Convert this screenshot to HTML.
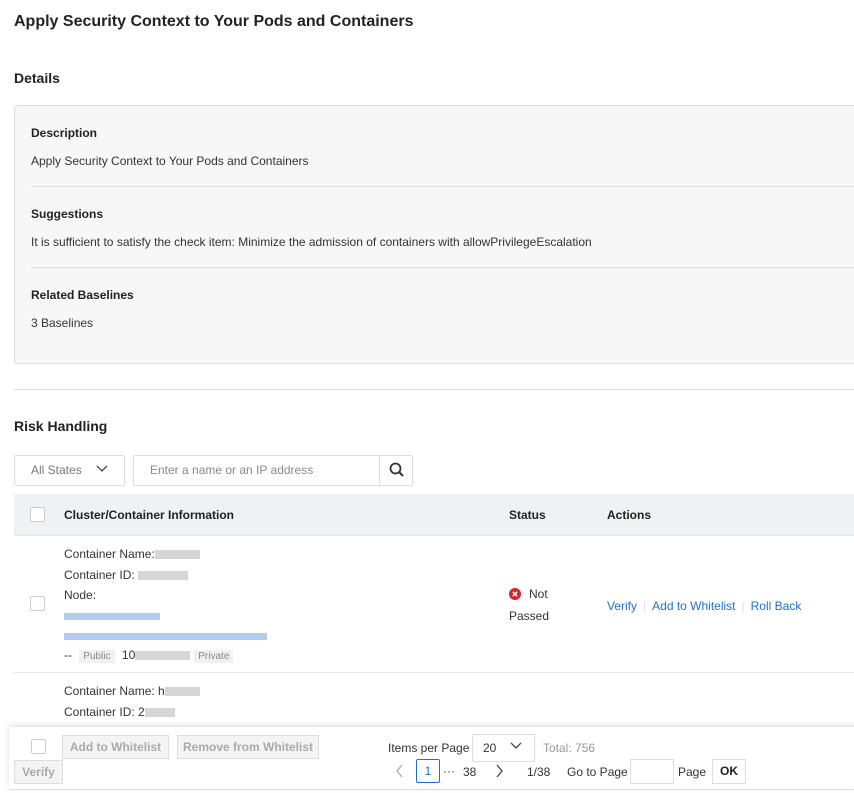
<!DOCTYPE html>
<html><head><meta charset="utf-8"><style>
*{box-sizing:border-box;margin:0;padding:0}
body{width:854px;height:793px;overflow:hidden;background:#fff;font-family:"Liberation Sans",Arial,sans-serif;color:#333;font-size:12px;position:relative}
.a{position:absolute;white-space:nowrap}
.b{font-weight:bold}
.blur{display:inline-block;height:9px;background:#ccc;vertical-align:middle;opacity:.8}
.bl{background:#9cc0ee}
.tag{display:inline-block;background:#f0f0f0;color:#888;font-size:10px;padding:1px 4px;margin:0 4px}
.cb{position:absolute;width:15px;height:15px;border:1px solid #ccc;background:#fff;border-radius:2px}
.btn{position:absolute;border:1px solid #ddd;background:#f4f4f4;color:#aaa;font-size:12px;font-weight:bold;text-align:center;line-height:22px}
a{color:#1e6fd0;text-decoration:none}
</style></head><body>
<div class="a b" style="left:14px;top:13px;font-size:16px;color:#222">Apply Security Context to Your Pods and Containers</div>
<div class="a b" style="left:14px;top:70px;font-size:14px;color:#222">Details</div>
<div class="a" style="left:14px;top:105px;width:860px;height:259px;background:#f7f7f7;border:1px solid #ddd;border-radius:3px"></div>
<div class="a b" style="left:31px;top:126px;color:#222">Description</div>
<div class="a" style="left:31px;top:154px">Apply Security Context to Your Pods and Containers</div>
<div class="a" style="left:31px;top:186px;width:823px;height:1px;background:#ddd"></div>
<div class="a b" style="left:31px;top:207px;color:#222">Suggestions</div>
<div class="a" style="left:31px;top:235px">It is sufficient to satisfy the check item: Minimize the admission of containers with allowPrivilegeEscalation</div>
<div class="a" style="left:31px;top:267px;width:823px;height:1px;background:#ddd"></div>
<div class="a b" style="left:31px;top:288px;color:#222">Related Baselines</div>
<div class="a" style="left:31px;top:316px">3 Baselines</div>
<div class="a" style="left:14px;top:389px;width:840px;height:1px;background:#ddd"></div>
<div class="a b" style="left:14px;top:418px;font-size:14px;color:#222">Risk Handling</div>
<div class="a" style="left:14px;top:455px;width:111px;height:31px;border:1px solid #ddd;border-radius:2px"></div>
<div class="a" style="left:31px;top:463px;color:#777">All States</div>
<svg class="a" style="left:95px;top:464px" width="14" height="10"><path d="M2 2l5 5 5-5" stroke="#444" fill="none" stroke-width="1.3"/></svg>
<div class="a" style="left:133px;top:455px;width:280px;height:31px;border:1px solid #ddd;border-radius:2px"></div>
<div class="a" style="left:379px;top:455px;width:1px;height:31px;background:#ddd"></div>
<div class="a" style="left:150px;top:463px;color:#888">Enter a name or an IP address</div>
<svg class="a" style="left:388px;top:461px" width="18" height="18"><circle cx="7.5" cy="7.5" r="5" stroke="#333" stroke-width="1.8" fill="none"/><path d="M11 11l4 4" stroke="#333" stroke-width="2"/></svg>
<div class="a" style="left:14px;top:494px;width:840px;height:42px;background:#eff1f4;border-bottom:1px solid #e3e5e8"></div>
<div class="cb" style="left:30px;top:507px"></div>
<div class="a b" style="left:64px;top:508px;color:#222">Cluster/Container Information</div>
<div class="a b" style="left:509px;top:508px;color:#222">Status</div>
<div class="a b" style="left:607px;top:508px;color:#222">Actions</div>
<div class="a" style="left:64px;top:547px">Container Name:<span class="blur" style="width:45px"></span></div>
<div class="a" style="left:64px;top:568px">Container ID: <span class="blur" style="width:50px"></span></div>
<div class="a" style="left:64px;top:588px">Node:</div>
<div class="cb" style="left:30px;top:596px"></div>
<div class="a" style="left:64px;top:609px"><span class="blur bl" style="width:96px;height:7px"></span></div>
<div class="a" style="left:64px;top:629px"><span class="blur bl" style="width:203px;height:7px"></span></div>
<div class="a" style="left:64px;top:648px">-- <span class="tag">Public</span> 10<span class="blur" style="width:55px"></span><span class="tag">Private</span></div>
<svg class="a" style="left:509px;top:588px" width="12" height="12"><circle cx="6" cy="6" r="6" fill="#d9222a"/><path d="M3.8 3.8l4.4 4.4M8.2 3.8l-4.4 4.4" stroke="#fff" stroke-width="1.5"/></svg>
<div class="a" style="left:529px;top:587px">Not</div>
<div class="a" style="left:509px;top:609px">Passed</div>
<div class="a" style="left:607px;top:599px"><a>Verify</a><span style="color:#ddd;margin:0 6px">|</span><a>Add to Whitelist</a><span style="color:#ddd;margin:0 6px">|</span><a>Roll Back</a></div>
<div class="a" style="left:14px;top:672px;width:840px;height:1px;background:#e5e5e5"></div>
<div class="a" style="left:64px;top:684px">Container Name: h<span class="blur" style="width:35px"></span></div>
<div class="a" style="left:64px;top:705px">Container ID: 2<span class="blur" style="width:30px"></span></div>
<div class="a" style="left:9px;top:727px;width:850px;height:63px;background:#fff;box-shadow:0 -2px 6px rgba(0,0,0,.12);border-bottom:1px solid #ddd"></div>
<div class="cb" style="left:31px;top:739px"></div>
<div class="btn" style="left:62px;top:735px;width:107px">Add to Whitelist</div>
<div class="btn" style="left:177px;top:735px;width:142px">Remove from Whitelist</div>
<div class="btn" style="left:14px;top:760px;width:49px">Verify</div>
<div class="a" style="left:388px;top:741px">Items per Page</div>
<div class="a" style="left:472px;top:734px;width:63px;height:28px;border:1px solid #ddd"></div>
<div class="a" style="left:483px;top:741px">20</div>
<svg class="a" style="left:509px;top:741px" width="14" height="10"><path d="M2 2l5 5 5-5" stroke="#444" fill="none" stroke-width="1.3"/></svg>
<div class="a" style="left:543px;top:741px;color:#999">Total: 756</div>
<svg class="a" style="left:395px;top:764px" width="10" height="14"><path d="M7 1L2 7l5 6" stroke="#aaa" fill="none" stroke-width="1.3"/></svg>
<div class="a" style="left:416px;top:759px;width:24px;height:24px;border:1px solid #1e6fd0;border-radius:2px;text-align:center;line-height:22px;color:#1e6fd0">1</div>
<div class="a" style="left:443px;top:764px">···</div>
<div class="a" style="left:463px;top:765px">38</div>
<svg class="a" style="left:494px;top:764px" width="10" height="14"><path d="M3 1l5 6-5 6" stroke="#444" fill="none" stroke-width="1.3"/></svg>
<div class="a" style="left:527px;top:765px">1/38</div>
<div class="a" style="left:567px;top:765px">Go to Page</div>
<div class="a" style="left:630px;top:759px;width:44px;height:25px;border:1px solid #ddd"></div>
<div class="a" style="left:678px;top:765px">Page</div>
<div class="a" style="left:712px;top:759px;width:34px;height:25px;border:1px solid #ddd;text-align:center;line-height:23px;font-weight:bold;color:#222">OK</div>
</body></html>
